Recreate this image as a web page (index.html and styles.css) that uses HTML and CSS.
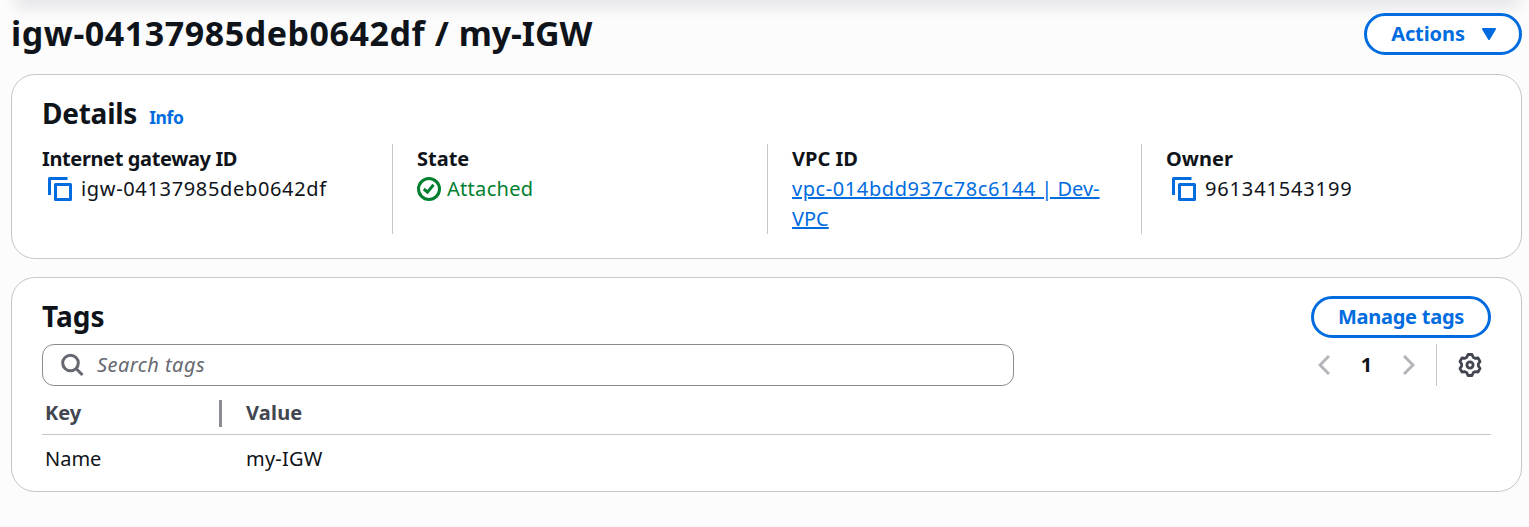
FILE: index.html
```html
<!DOCTYPE html>
<html lang="en">
<head>
<meta charset="utf-8">
<title>Internet gateway details</title>
<link rel="stylesheet" href="styles.css">
</head>
<body>
<main class="page">
  <div class="top-shadow"></div>
  <header class="page-header">
    <h1 class="page-title">igw-04137985deb0642df / <span class="title-name">my-IGW</span></h1>
    <button class="button button-actions">Actions
      <svg class="caret" viewBox="0 0 16 14"><path d="M2 2h12L8 12z" fill="currentColor" stroke="currentColor" stroke-width="2" stroke-linejoin="round"/></svg>
    </button>
  </header>

  <section class="card details">
    <div class="details-header">
      <h2 class="card-title details-title">Details</h2>
      <a class="info">Info</a>
    </div>
    <div class="columns">
      <div class="column">
        <div class="label label-gateway">Internet gateway ID</div>
        <div class="value copyable">
          <svg class="copy" viewBox="0 0 24 24"><path d="M1.500 18V1.500H19.500M7.500 7.500H22.500V22.500H7.500Z"/></svg>
          <span class="gateway-id">igw-04137985deb0642df</span>
        </div>
      </div>
      <div class="column">
        <div class="label">State</div>
        <div class="value status">
          <svg class="check" viewBox="0 0 24 24"><circle cx="12" cy="12" r="10.500"/><path d="M6.800 12l3.700 3.200L16.500 7.800"/></svg>
          <span>Attached</span>
        </div>
      </div>
      <div class="column">
        <div class="label">VPC ID</div>
        <div class="value"><a class="link"><span class="link-id">vpc-014bdd937c78c6144</span> | Dev-<br>VPC</a></div>
      </div>
      <div class="column">
        <div class="label">Owner</div>
        <div class="value copyable">
          <svg class="copy" viewBox="0 0 24 24"><path d="M1.500 18V1.500H19.500M7.500 7.500H22.500V22.500H7.500Z"/></svg>
          <span class="owner-id">961341543199</span>
        </div>
      </div>
    </div>
  </section>

  <section class="card tags">
    <div class="tags-header">
      <h2 class="card-title">Tags</h2>
      <button class="button button-manage">Manage tags</button>
    </div>
    <div class="toolbar">
      <div class="search">
        <svg class="magnifier" viewBox="0 0 24 24"><circle cx="9.500" cy="10" r="7.800"/><path d="M15 15.500L21.500 22"/></svg>
        <span class="placeholder">Search tags</span>
      </div>
      <div class="pagination">
        <svg class="chevron" viewBox="0 0 12 20"><path d="M11 1L2 10l9 9"/></svg>
        <span class="page-number">1</span>
        <svg class="chevron" viewBox="0 0 12 20"><path d="M1 1l9 9-9 9"/></svg>
      </div>
      <div class="preferences">
        <svg class="gear" viewBox="0 0 24 24"><path d="M10 1.500H14L15.200 4.300 17.100 5.400 20 5 22 8.400 20.400 11V13L22 15.600 20 19 17.100 18.600 15.200 19.700 14 22.500H10L8.800 19.700 6.900 18.600 4 19 2 15.600 3.600 13V11L2 8.400 4 5 6.900 5.400 8.800 4.300Z"/><circle cx="12" cy="12" r="3.100"/></svg>
      </div>
    </div>
    <div class="table">
      <div class="row row-head"><div class="cell-key">Key</div><div class="cell-value">Value</div></div>
      <div class="row"><div class="cell-key">Name</div><div class="cell-value">my-IGW</div></div>
    </div>
  </section>
</main>
</body>
</html>
```
FILE: styles.css
```css
* { box-sizing: border-box; }
body { margin: 0; background: #fcfcfd; color: #0f141a; font: 20px/30px "Noto Sans", "Open Sans", sans-serif; }
h1, h2 { margin: 0; }
svg { fill: none; flex: none; }
.page { height: 527px; padding: 0 7px 0 11px; overflow: hidden; }
.top-shadow { height: 0; margin: 0 8px 13px 10px; box-shadow: 0 0 16px 6px rgba(0, 7, 22, .13); }
.page-header { display: flex; justify-content: space-between; height: 61px; }
.page-title { font-size: 34px; line-height: 40px; letter-spacing: .54px; white-space: nowrap; }
.title-name { letter-spacing: -.1px; }
.button { display: flex; align-items: center; justify-content: center; height: 42px; padding: 0; border: 3px solid #006ce0; border-radius: 21px; background: #fff; color: #006ce0; font: 700 20px/30px "Noto Sans", sans-serif; }
.button-actions { width: 158px; padding-left: 2px; gap: 16px; letter-spacing: -.1px; }
.caret { width: 16px; height: 14px; }
.card { width: 1511px; border: 1px solid #c6c6cd; border-radius: 24px; background: #fff; }
.details { height: 185px; padding: 20px 30px 0; }
.details-header { display: flex; align-items: baseline; gap: 12px; height: 49px; }
.card-title { font-size: 28px; line-height: 36px; }
.details-title { letter-spacing: -.25px; }
.tags .card-title { margin-top: -2px; }
.info { color: #006ce0; font-size: 17.500px; font-weight: 700; letter-spacing: -.4px; }
.columns { display: grid; grid-template-columns: 350px 375px 374px 1fr; height: 90px; }
.column + .column { border-left: 1px solid #c6c6cd; padding-left: 24px; }
.label { font-weight: 700; }
.label-gateway { letter-spacing: -.37px; }
.value { white-space: nowrap; }
.copyable { display: flex; align-items: center; padding-left: 6px; gap: 9px; }
.copy { width: 24px; height: 24px; stroke: #006ce0; stroke-width: 3; stroke-linejoin: round; }
.gateway-id { letter-spacing: .66px; }
.owner-id { letter-spacing: .85px; }
.status { display: flex; align-items: center; gap: 6px; color: #00802f; letter-spacing: .3px; }
.check { width: 24px; height: 24px; stroke: currentColor; stroke-width: 3; }
.link { color: #006ce0; text-decoration: underline; text-decoration-thickness: 2px; letter-spacing: 0; }
.link-id { letter-spacing: .58px; }
.tags { height: 215px; margin-top: 18px; padding: 18px 30px 0; }
.tags-header { display: flex; justify-content: space-between; align-items: center; height: 42px; }
.button-manage { width: 180px; letter-spacing: -.25px; }
.toolbar { display: flex; height: 42px; margin-top: 6px; }
.search { display: flex; align-items: center; gap: 12px; width: 972px; padding-left: 18px; border: 1px solid #8c8c94; border-radius: 12px; }
.magnifier { width: 24px; height: 24px; stroke: #656871; stroke-width: 3; }
.placeholder { color: #656871; font-style: italic; letter-spacing: .45px; }
.pagination { display: flex; align-items: center; justify-content: space-between; width: 97px; margin: 0 21px 0 auto; }
.page-number { font-weight: 700; }
.chevron { width: 12px; height: 20px; stroke: #b4b4bb; stroke-width: 3; }
.preferences { display: flex; align-items: center; width: 55px; padding-left: 21px; border-left: 1px solid #c6c6cd; }
.gear { width: 24px; height: 24px; stroke: #424650; stroke-width: 2.800; stroke-linejoin: round; }
.row { display: flex; align-items: center; height: 49px; padding: 0 0 2px 3px; }
.row-head { padding: 6px 0 0 3px; border-bottom: 1px solid #c6c6cd; color: #424650; font-weight: 700; }
.cell-key { width: 177px; }
.row-head .cell-key { height: 27px; border-right: 3px solid #8c8c94; line-height: 26px; }
.cell-value { padding-left: 24px; letter-spacing: .2px; }
```
